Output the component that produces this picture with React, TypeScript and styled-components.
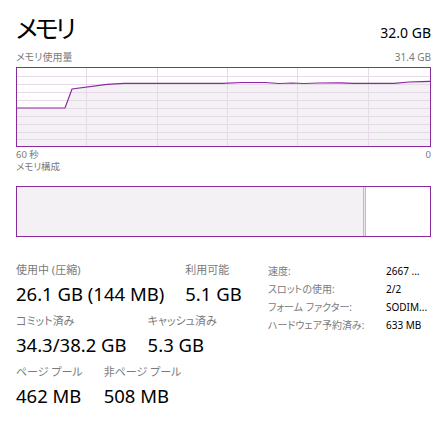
import React from 'react'
import styled, { createGlobalStyle } from 'styled-components'

const PURPLE = '#8b2a9e'
const FILL = '#f4f1f5'
const GRID = '#e6dae9'

const GlobalStyle = createGlobalStyle`
  body {
    margin: 0;
    background: #ffffff;
    font-family: "Noto Sans", "Noto Sans CJK JP", sans-serif;
    font-feature-settings: "palt";
    color: #000000;
  }
`

const Page = styled.div`
  width: 443px;
  padding: 10px 12px 0 16px;
  box-sizing: border-box;
`

const Header = styled.div`
  display: flex;
  justify-content: space-between;
  align-items: baseline;
  height: 40px;
`

const Title = styled.h1`
  margin: 0;
  font-family: "Noto Sans CJK JP", sans-serif;
  font-weight: 400;
  font-size: 25px;
  line-height: 34px;
  letter-spacing: -3px;
`

const Total = styled.span`
  font-size: 14px;
`

const ChartCaption = styled.div<{ $size?: number; $h?: number }>`
  display: flex;
  justify-content: space-between;
  align-items: center;
  color: #7a7a7a;
  font-size: ${({ $size }) => $size ?? 9}px;
  line-height: ${({ $h }) => $h ?? 14}px;
  height: ${({ $h }) => $h ?? 14}px;
`

const Frame = styled.div<{ $h: number; $mt?: number }>`
  border: 1px solid ${PURPLE};
  height: ${({ $h }) => $h}px;
  box-sizing: border-box;
  margin-top: ${({ $mt }) => $mt ?? 0}px;
  overflow: hidden;

  svg {
    display: block;
  }
`

const Stats = styled.div`
  display: flex;
  justify-content: space-between;
  align-items: flex-start;
  margin-top: 25px;
`

const StatColumn = styled.div`
  display: flex;
  flex-direction: column;
  gap: 3px;
`

const StatRow = styled.div`
  display: flex;
  gap: 21px;
`

const Stat = styled.div`
  display: flex;
  flex-direction: column;
`

const StatLabel = styled.span`
  color: #7a7a7a;
  font-size: 11px;
  line-height: 16px;
`

const StatValue = styled.span`
  font-size: 18.5px;
  line-height: 32px;
  white-space: nowrap;
`

const Specs = styled.div`
  display: grid;
  grid-template-columns: 118px 45px;
  row-gap: 4px;
  margin-top: 2px;
  font-size: 10px;
  line-height: 14px;
`

const SpecLabel = styled.span`
  color: #7a7a7a;
  white-space: nowrap;
`

const SpecValue = styled.span`
  color: #000000;
  white-space: nowrap;
`

const W = 413
const H = 78

const usage: [number, number][] = [
  [0, 40],
  [48, 40],
  [55, 21],
  [90, 16.3],
  [107, 15.3],
  [205, 15.3],
  [225, 14.5],
  [248, 14.5],
  [262, 15.5],
  [275, 15],
  [287, 15.5],
  [302, 15],
  [322, 14.8],
  [337, 15.4],
  [377, 15.3],
  [392, 14],
  [405, 13.6],
  [413, 13.4],
]

const UsageChart = () => {
  const line = usage.map(([x, y]) => `${x},${y}`).join(' ')
  const area = `0,${H} ${line} ${W},${H}`
  const vLines = [69, 140, 210, 280, 351]
  const hLines = [8, 16, 24, 32, 40, 48, 56, 64, 71]
  return (
    <svg width={W} height={H} viewBox={`0 0 ${W} ${H}`}>
      <polygon points={area} fill={FILL} />
      {hLines.map((y) => (
        <line key={`h${y}`} x1={0} x2={W} y1={y + 0.5} y2={y + 0.5} stroke={GRID} strokeWidth={1} />
      ))}
      {vLines.map((x) => (
        <line key={`v${x}`} x1={x + 0.5} x2={x + 0.5} y1={0} y2={H} stroke={GRID} strokeWidth={1} />
      ))}
      <polyline points={line} fill="none" stroke={PURPLE} strokeWidth={1.2} />
    </svg>
  )
}

const CompositionBar = () => (
  <svg width={W} height={49} viewBox={`0 0 ${W} 49`}>
    <rect x={0} y={0} width={346} height={49} fill={FILL} />
    <rect x={346} y={0} width={3} height={49} fill="#cfaedb" />
    <rect x={347} y={0} width={1} height={49} fill="#efe4f2" />
  </svg>
)

const specs = [
  ['速度:', '2667 ...'],
  ['スロットの使用:', '2/2'],
  ['フォーム ファクター:', 'SODIM...'],
  ['ハードウェア予約済み:', '633 MB'],
]

export default function App() {
  return (
    <Page>
      <GlobalStyle />
      <Header>
        <Title>メモリ</Title>
        <Total>32.0 GB</Total>
      </Header>
      <ChartCaption $size={10}>
        <span>メモリ使用量</span>
        <span>31.4 GB</span>
      </ChartCaption>
      <Frame $h={80} $mt={3}>
        <UsageChart />
      </Frame>
      <ChartCaption $size={9.5} $h={12} style={{ marginTop: 2 }}>
        <span>60 秒</span>
        <span>0</span>
      </ChartCaption>
      <ChartCaption $size={9.5} $h={12}>
        <span>メモリ構成</span>
      </ChartCaption>
      <Frame $h={51} $mt={13}>
        <CompositionBar />
      </Frame>
      <Stats>
        <StatColumn>
          <StatRow>
            <Stat>
              <StatLabel>使用中 (圧縮)</StatLabel>
              <StatValue>26.1 GB (144 MB)</StatValue>
            </Stat>
            <Stat>
              <StatLabel>利用可能</StatLabel>
              <StatValue>5.1 GB</StatValue>
            </Stat>
          </StatRow>
          <StatRow>
            <Stat>
              <StatLabel>コミット済み</StatLabel>
              <StatValue>34.3/38.2 GB</StatValue>
            </Stat>
            <Stat>
              <StatLabel>キャッシュ済み</StatLabel>
              <StatValue>5.3 GB</StatValue>
            </Stat>
          </StatRow>
          <StatRow>
            <Stat>
              <StatLabel>ページ プール</StatLabel>
              <StatValue>462 MB</StatValue>
            </Stat>
            <Stat>
              <StatLabel>非ページ プール</StatLabel>
              <StatValue>508 MB</StatValue>
            </Stat>
          </StatRow>
        </StatColumn>
        <Specs>
          {specs.map(([label, value]) => (
            <React.Fragment key={label}>
              <SpecLabel>{label}</SpecLabel>
              <SpecValue>{value}</SpecValue>
            </React.Fragment>
          ))}
        </Specs>
      </Stats>
    </Page>
  )
}
